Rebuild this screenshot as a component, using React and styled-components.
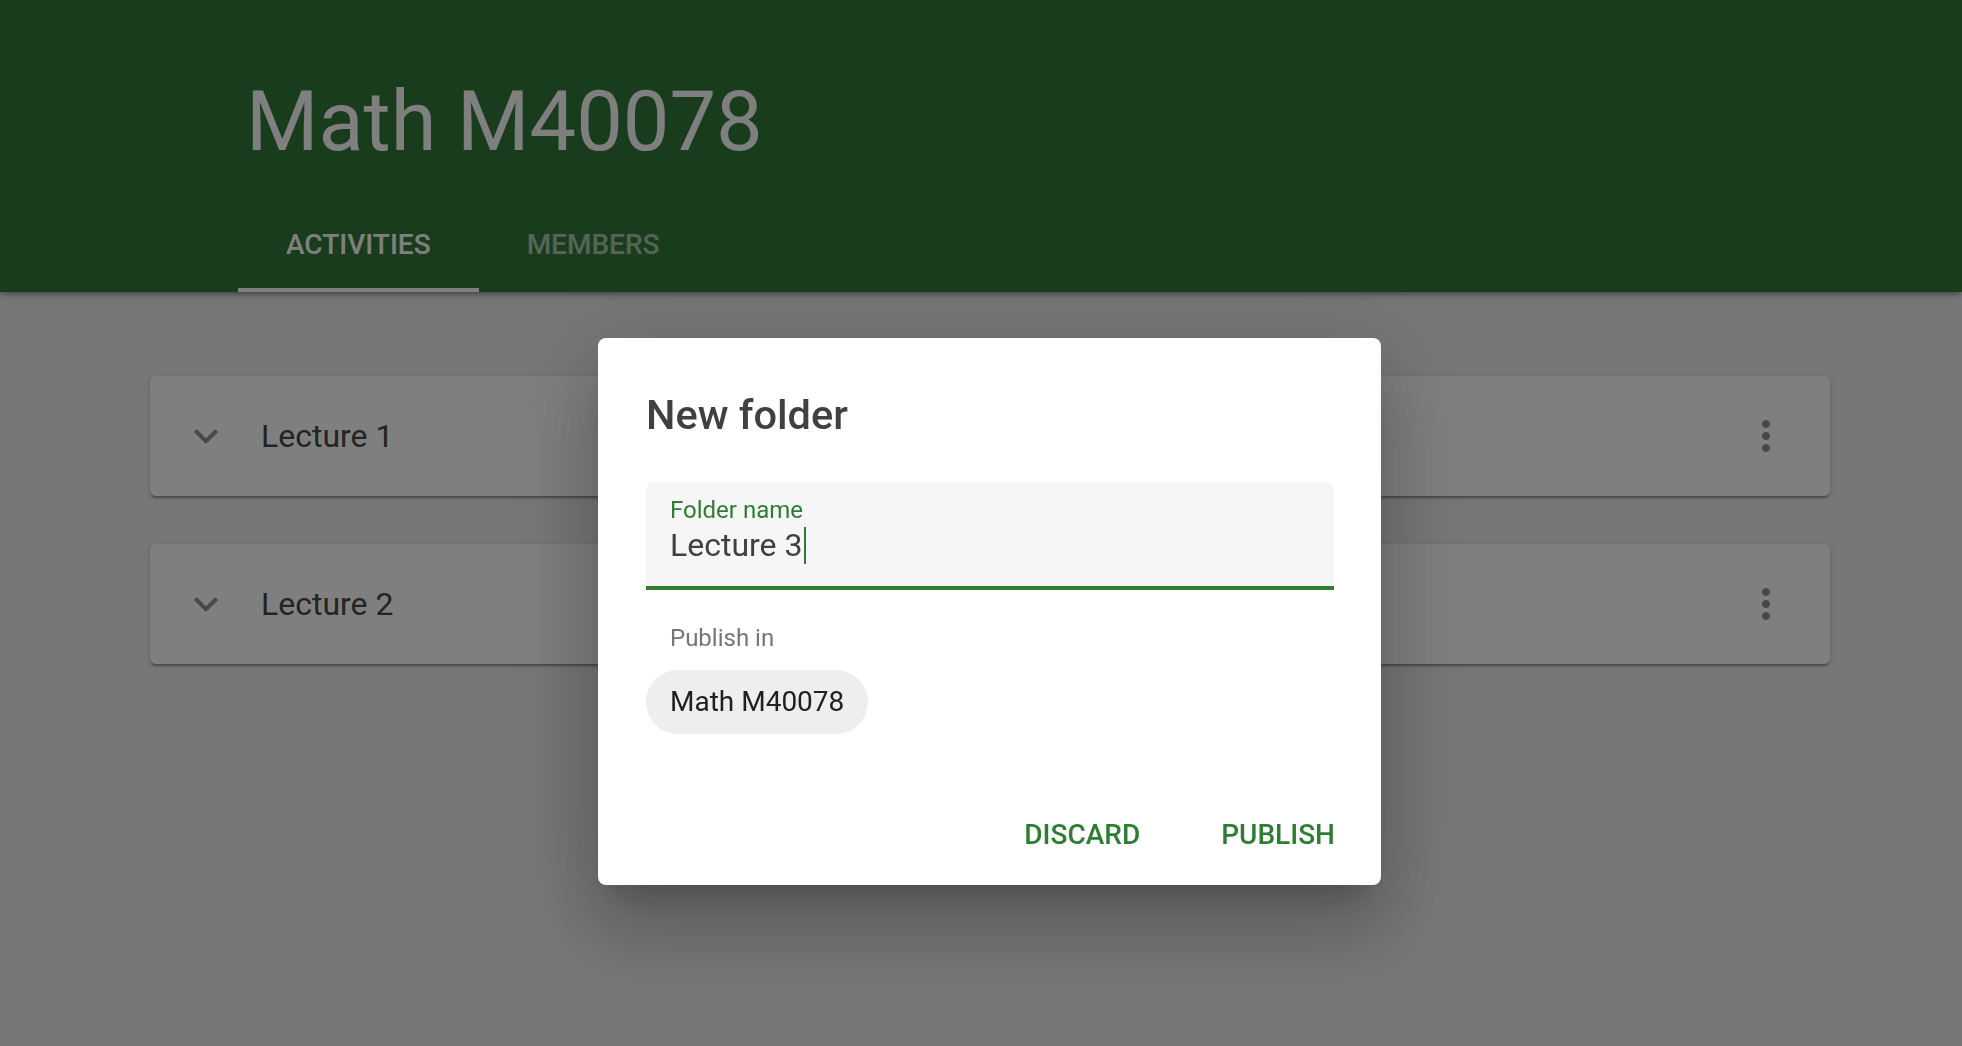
import React from "react";
import styled, { createGlobalStyle } from "styled-components";

const GlobalStyle = createGlobalStyle`
  html, body { margin: 0; padding: 0; }
  body {
    font-family: Roboto, "Noto Sans", "Liberation Sans", sans-serif;
    background: #eeeeee;
    -webkit-font-smoothing: antialiased;
  }
  * { box-sizing: border-box; }
`;

const Page = styled.div`
  min-height: 1046px;
  background: #eeeeee;
`;

const Header = styled.header`
  background: #337b39;
  height: 292px;
  padding: 74px 0 0 238px;
  display: flex;
  flex-direction: column;
  gap: 26px;
  box-shadow: 0 4px 8px -2px rgba(0, 0, 0, 0.3), 0 2px 4px rgba(0, 0, 0, 0.2);
  position: relative;
  z-index: 1;
`;

const Title = styled.h1`
  margin: 0 0 0 8px;
  font-size: 83px;
  line-height: 96px;
  font-weight: 400;
  color: #ffffff;
  letter-spacing: 0;
`;

const Tabs = styled.nav`
  display: flex;
  height: 96px;
`;

const Tab = styled.div`
  height: 96px;
  padding: 4px 48px 0;
  display: flex;
  align-items: center;
  font-size: 28px;
  font-weight: 500;
  text-transform: uppercase;
  color: ${(p) => (p.$active ? "#ffffff" : "rgba(255,255,255,0.6)")};
  border-bottom: 4px solid ${(p) => (p.$active ? "#ffffff" : "transparent")};
`;

const Content = styled.main`
  padding: 84px 0 0 150px;
  display: flex;
  flex-direction: column;
  gap: 48px;
`;

const Card = styled.div`
  width: 1680px;
  height: 120px;
  background: #ffffff;
  border-radius: 6px;
  display: flex;
  align-items: center;
  padding: 0 40px 0 32px;
  gap: 31px;
  box-shadow: 0 4px 2px -2px rgba(0, 0, 0, 0.2), 0 2px 2px 0 rgba(0, 0, 0, 0.14),
    0 2px 6px 0 rgba(0, 0, 0, 0.12);
`;

const CardTitle = styled.span`
  flex: 1;
  font-size: 32px;
  color: #484848;
`;

const Icon = styled.svg`
  width: 48px;
  height: 48px;
  flex: none;
  fill: ${(p) => p.$color || "#8e8e8e"};
`;

const Scrim = styled.div`
  position: fixed;
  inset: 0;
  background: rgba(0, 0, 0, 0.5);
  z-index: 10;
  display: flex;
  justify-content: center;
  align-items: flex-start;
  padding: 338px 0 0 17px;
`;

const Dialog = styled.div`
  width: 783px;
  background: #ffffff;
  border-radius: 8px;
  box-shadow: 0 22px 30px -14px rgba(0, 0, 0, 0.2), 0 48px 76px 6px rgba(0, 0, 0, 0.14),
    0 18px 92px 16px rgba(0, 0, 0, 0.12);
  display: flex;
  flex-direction: column;
`;

const DialogTitle = styled.h2`
  margin: 0;
  padding: 45px 48px 0;
  font-size: 41.5px;
  line-height: 63px;
  font-weight: 500;
  color: #404040;
`;

const DialogBody = styled.div`
  padding: 36px 47px 0 48px;
  display: flex;
  flex-direction: column;
  align-items: flex-start;
`;

const Field = styled.div`
  align-self: stretch;
  background: #f6f6f6;
  border-radius: 8px 8px 0 0;
  border-bottom: 4px solid #2e7d32;
  padding: 14px 23px 21px 24px;
  display: flex;
  flex-direction: column;
  gap: 1px;
`;

const FieldLabel = styled.label`
  font-size: 24px;
  line-height: 28px;
  color: #2e7d32;
`;

const FieldValue = styled.div`
  font-size: 32px;
  line-height: 40px;
  color: #404040;
  display: flex;
  align-items: center;
`;

const Caret = styled.span`
  display: inline-block;
  width: 2px;
  height: 37px;
  background: #2e7d32;
  margin-left: 1px;
`;

const SectionLabel = styled.div`
  margin-top: 34px;
  padding-left: 24px;
  font-size: 24px;
  line-height: 28px;
  color: #757575;
`;

const Chip = styled.div`
  margin-top: 18px;
  height: 64px;
  line-height: 64px;
  padding: 0 24px 0 24px;
  border-radius: 32px;
  background: #eeeeee;
  font-size: 28px;
  color: #212121;
`;

const Actions = styled.div`
  display: flex;
  justify-content: flex-end;
  gap: 49px;
  padding: 64px 30px 15px;
`;

const TextButton = styled.button`
  height: 72px;
  padding: 0 16px;
  border: none;
  background: transparent;
  font-family: inherit;
  font-size: 28px;
  font-weight: 500;
  text-transform: uppercase;
  color: #2e7d32;
  cursor: pointer;
`;

const ChevronDown = () => (
  <Icon viewBox="0 0 24 24" $color="#909090">
    <path d="M16.59 8.59L12 13.17 7.41 8.59 6 10l6 6 6-6z" />
  </Icon>
);

const MoreVert = () => (
  <Icon viewBox="0 0 24 24" $color="#8e8e8e">
    <path d="M12 8c1.1 0 2-.9 2-2s-.9-2-2-2-2 .9-2 2 .9 2 2 2zm0 2c-1.1 0-2 .9-2 2s.9 2 2 2 2-.9 2-2-.9-2-2-2zm0 6c-1.1 0-2 .9-2 2s.9 2 2 2 2-.9 2-2-.9-2-2-2z" />
  </Icon>
);

const lectures = ["Lecture 1", "Lecture 2"];

export default function App() {
  return (
    <>
      <GlobalStyle />
      <Page>
        <Header>
          <Title>Math M40078</Title>
          <Tabs>
            <Tab $active>Activities</Tab>
            <Tab>Members</Tab>
          </Tabs>
        </Header>
        <Content>
          {lectures.map((l) => (
            <Card key={l}>
              <ChevronDown />
              <CardTitle>{l}</CardTitle>
              <MoreVert />
            </Card>
          ))}
        </Content>
      </Page>
      <Scrim>
        <Dialog>
          <DialogTitle>New folder</DialogTitle>
          <DialogBody>
            <Field>
              <FieldLabel>Folder name</FieldLabel>
              <FieldValue>
                Lecture 3<Caret />
              </FieldValue>
            </Field>
            <SectionLabel>Publish in</SectionLabel>
            <Chip>Math M40078</Chip>
          </DialogBody>
          <Actions>
            <TextButton>Discard</TextButton>
            <TextButton>Publish</TextButton>
          </Actions>
        </Dialog>
      </Scrim>
    </>
  );
}
